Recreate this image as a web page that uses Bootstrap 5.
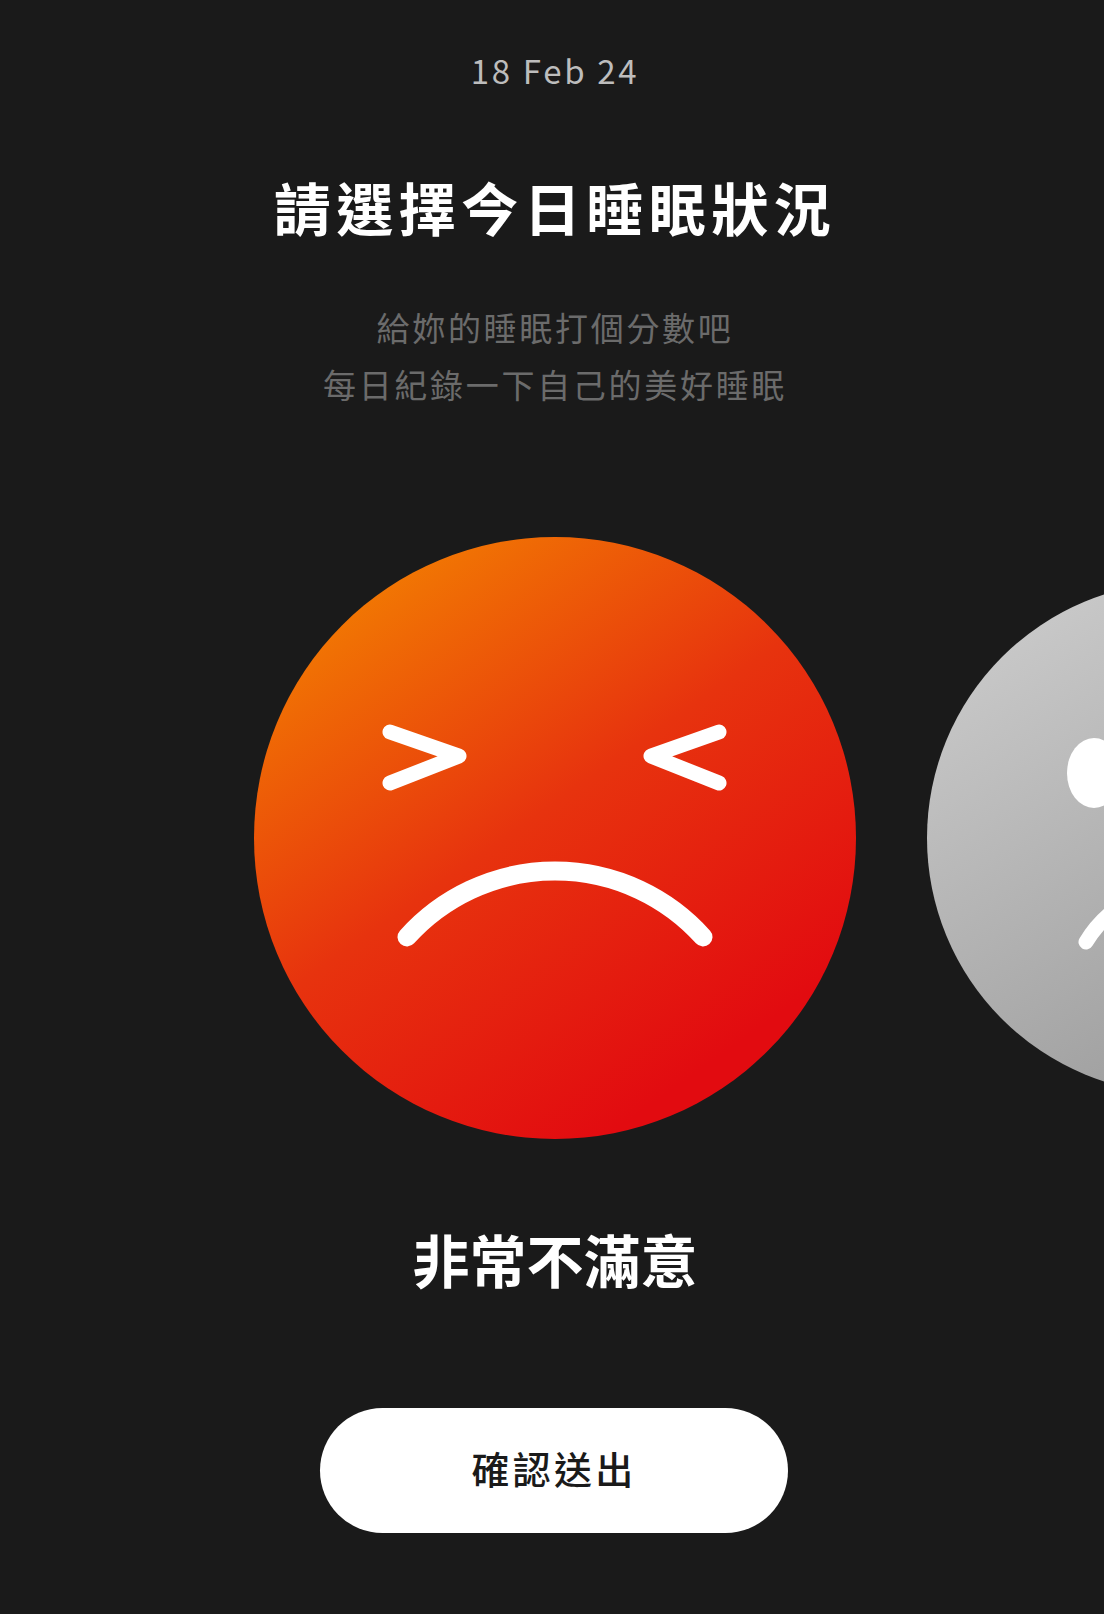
<!DOCTYPE html>
<html lang="zh-Hant">
<head>
<meta charset="utf-8">
<title>今日睡眠</title>
<link href="https://cdn.jsdelivr.net/npm/bootstrap@5.3.0/dist/css/bootstrap.min.css" rel="stylesheet">
<style>
html,body{background:#1a1a1a;height:1614px;overflow:hidden}
body{font-family:"Noto Sans CJK TC","Noto Sans",sans-serif}
.sleep-page{width:1104px;height:1614px;padding-left:6px}
.date-line{font-weight:400;font-size:33px;line-height:44px;letter-spacing:2.7px;color:#bdbdbd;margin-top:48px}
.head-title{font-weight:700;font-size:57px;line-height:70px;letter-spacing:5.5px;color:#fff;margin:79px 0 0}
.sub-text{font-weight:400;font-size:33px;line-height:57px;letter-spacing:2.7px;color:#6b6b6b;margin-top:58px}
.face-track{margin-top:124px;margin-left:-6px;padding-left:254px;gap:71px;width:1104px;overflow:hidden;align-self:flex-start}
.face-main{flex:0 0 602px;width:602px;height:602px;display:block}
.face-next{flex:0 0 512px;width:512px;height:512px;display:block}
.mood-label{font-weight:700;font-size:57px;line-height:70px;color:#fff;margin-top:84px}
.send-btn{width:468px;height:125px;margin-top:115px;margin-left:-2px;border-radius:63px;background:#fff;border:0;color:#1a1a1a;font-weight:500;font-size:38px;letter-spacing:3.3px;padding:0 0 6px}
</style>
</head>
<body>
<main class="sleep-page d-flex flex-column align-items-center text-center">
  <div class="date-line">18 Feb 24</div>
  <h1 class="head-title">請選擇今日睡眠狀況</h1>
  <p class="sub-text mb-0">給妳的睡眠打個分數吧<br>每日紀錄一下自己的美好睡眠</p>
  <div class="face-track d-flex align-items-center">
    <svg class="face-main" viewBox="0 0 602 602" xmlns="http://www.w3.org/2000/svg" aria-label="非常不滿意">
      <defs><linearGradient id="hot" x1="0.14" y1="0.08" x2="0.72" y2="0.9"><stop offset="0" stop-color="#f27c02"/><stop offset="0.5" stop-color="#e7330e"/><stop offset="1" stop-color="#e20b10"/></linearGradient></defs>
      <circle cx="301" cy="301" r="301" fill="url(#hot)"/>
      <g fill="none" stroke="#fff" stroke-linecap="round" stroke-linejoin="round">
        <path d="M136 195 L205 219 L136 246" stroke-width="15"/>
        <path d="M465 195 L397 219 L465 246" stroke-width="15"/>
        <path d="M153 400 A199 199 0 0 1 449 400" stroke-width="19"/>
      </g>
    </svg>
    <svg class="face-next" viewBox="0 0 512 512" xmlns="http://www.w3.org/2000/svg" aria-label="不滿意">
      <defs><linearGradient id="cold" x1="0.17" y1="0.04" x2="0.7" y2="0.92"><stop offset="0" stop-color="#cacaca"/><stop offset="1" stop-color="#9c9c9c"/></linearGradient></defs>
      <circle cx="256" cy="256" r="256" fill="url(#cold)"/>
      <ellipse cx="167" cy="191" rx="27" ry="35" fill="#fff"/>
      <ellipse cx="345" cy="191" rx="27" ry="35" fill="#fff"/>
      <path d="M159 360 A113 113 0 0 1 353 360" fill="none" stroke="#fff" stroke-width="15" stroke-linecap="round"/>
    </svg>
  </div>
  <div class="mood-label">非常不滿意</div>
  <button type="button" class="btn send-btn">確認送出</button>
</main>
<script src="https://cdn.jsdelivr.net/npm/bootstrap@5.3.0/dist/js/bootstrap.bundle.min.js"></script>
</body>
</html>
